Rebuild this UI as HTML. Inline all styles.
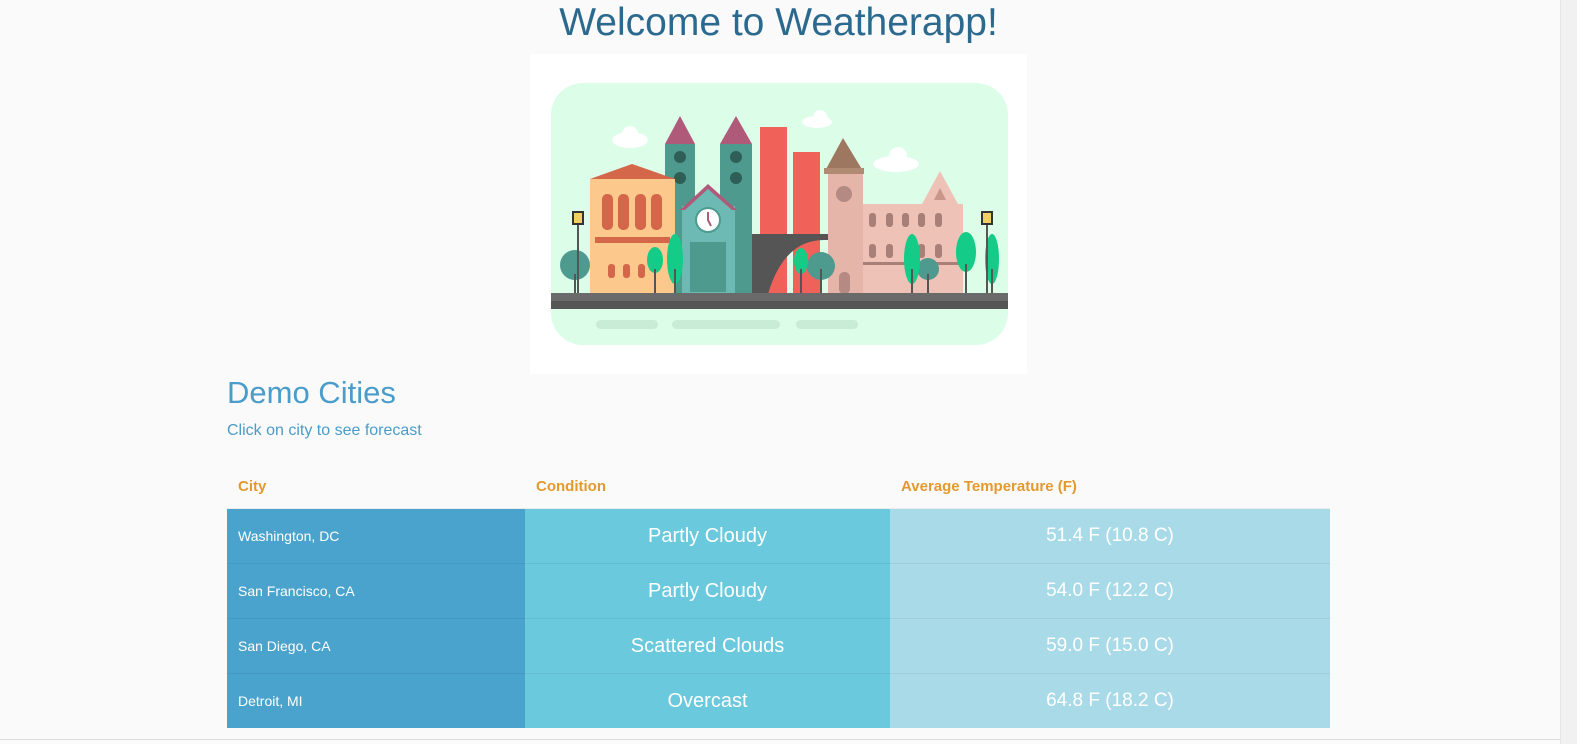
<!DOCTYPE html>
<html><head><meta charset="utf-8"><style>
html,body{margin:0;padding:0;background:#fafafa;width:1577px;height:744px;overflow:hidden;font-family:"Liberation Sans",sans-serif}
h1{position:absolute;left:0;width:1557px;top:1px;margin:0;text-align:center;font-weight:400;font-size:39px;line-height:44px;color:#2b6a8e}
.ill{position:absolute;left:530px;top:54px;width:497px;height:320px;background:#fff}
h2{position:absolute;left:227px;top:374px;margin:0;font-weight:400;font-size:31px;line-height:38px;color:#4a9ccb}
.sub{position:absolute;left:227px;top:422px;font-size:16px;color:#4a9ccb}
table{position:absolute;left:227px;top:465px;border-collapse:collapse;width:1103px}
th{height:43px;text-align:left;color:#e39a2c;font-weight:600;font-size:15px;padding:0 0 0 11px}
td{height:54px;border-top:1px solid rgba(0,0,0,0.06);color:#fff;padding:0}
td.c{background:#4aa3cc;width:287px;padding-left:11px;font-size:14px}
td.d{background:#6bc9dd;width:365px;text-align:center;font-size:20px}
td.t{background:#a9dae7;text-align:center;font-size:19px}
.sb{position:absolute;left:1560px;top:0;width:17px;height:744px;background:#f1f1f1;border-left:1px solid #e6e6e6}
.bl{position:absolute;left:0;top:739px;width:1560px;height:1px;background:#ddd}
</style></head><body>
<h1>Welcome to Weatherapp!</h1>
<div class="ill"><svg width="497" height="320" viewBox="0 0 497 320">
<rect x="21" y="29" width="457" height="262" rx="32" fill="#dcfde8"/>
<rect x="66" y="266" width="62" height="9" rx="4.5" fill="#c9ecd6"/>
<rect x="142" y="266" width="108" height="9" rx="4.5" fill="#c9ecd6"/>
<rect x="266" y="266" width="62" height="9" rx="4.5" fill="#c9ecd6"/>
<g fill="#fff"><ellipse cx="100" cy="86" rx="18" ry="8"/><circle cx="100" cy="80" r="8"/><ellipse cx="287" cy="68" rx="15" ry="6"/><circle cx="290" cy="63" r="7"/><ellipse cx="366" cy="110" rx="23" ry="8"/><circle cx="368" cy="102" r="9"/></g>
<rect x="135" y="90" width="30" height="150" fill="#4e9a8e"/><polygon points="135,90 150,62 165,90" fill="#b05a7a"/>
<rect x="190" y="90" width="32" height="150" fill="#4e9a8e"/><polygon points="190,90 206,62 222,90" fill="#b05a7a"/>
<circle cx="150" cy="103" r="6" fill="#2e5e55"/><circle cx="150" cy="124" r="6" fill="#2e5e55"/><circle cx="206" cy="103" r="6" fill="#2e5e55"/><circle cx="206" cy="124" r="6" fill="#2e5e55"/>
<rect x="60" y="125" width="85" height="115" fill="#fcc88c"/><polygon points="60,125 102,110 145,125" fill="#d4664a"/>
<g fill="#d4664a"><rect x="72" y="140" width="11" height="36" rx="5"/><rect x="88" y="140" width="11" height="36" rx="5"/><rect x="105" y="140" width="11" height="36" rx="5"/><rect x="121" y="140" width="11" height="36" rx="5"/><rect x="65" y="183" width="75" height="6"/><rect x="78" y="210" width="7" height="14" rx="3"/><rect x="93" y="210" width="7" height="14" rx="3"/><rect x="108" y="210" width="7" height="14" rx="3"/></g>
<rect x="152" y="152" width="53" height="88" fill="#6dbab5"/><polygon points="150,156 178,130 207,156" fill="#b05a7a"/><polygon points="155,156 178,135 202,156" fill="#6dbab5"/>
<circle cx="178" cy="166" r="12" fill="#fff" stroke="#4e9a8e" stroke-width="2"/><path d="M178 158v8l3 6" stroke="#b05a7a" stroke-width="2" fill="none"/>
<g fill="#4e9a8e"><rect x="160" y="188" width="36" height="50"/></g>
<rect x="230" y="73" width="27" height="167" fill="#f0615a"/><rect x="263" y="98" width="27" height="142" fill="#f0615a"/>
<path d="M222 180h76v6h-4q-40 0-56 54h-16z" fill="#555"/>
<rect x="298" y="117" width="35" height="123" fill="#e5b5aa"/><polygon points="295,117 313,84 333,117" fill="#9d7760"/><rect x="294" y="114" width="40" height="6" fill="#b08a72"/>
<circle cx="314" cy="140" r="8" fill="#b48a82"/><rect x="309" y="218" width="11" height="22" rx="5" fill="#b48a82"/>
<rect x="333" y="150" width="100" height="90" fill="#efc2b7"/><polygon points="392,150 410,117 428,150" fill="#efc2b7"/><polygon points="404,146 410,134 416,146" fill="#c8968a"/>
<g fill="#a98078"><rect x="339" y="159" width="7" height="14" rx="3"/><rect x="356" y="159" width="7" height="14" rx="3"/><rect x="372" y="159" width="7" height="14" rx="3"/><rect x="388" y="159" width="7" height="14" rx="3"/><rect x="405" y="159" width="7" height="14" rx="3"/><rect x="339" y="190" width="7" height="14" rx="3"/><rect x="356" y="190" width="7" height="14" rx="3"/><rect x="388" y="190" width="7" height="14" rx="3"/><rect x="405" y="190" width="7" height="14" rx="3"/><rect x="333" y="208" width="100" height="3"/></g>
<g fill="#4e9a8e"><circle cx="45" cy="211" r="15"/><circle cx="291" cy="212" r="14"/><circle cx="398" cy="215" r="11"/></g>
<g fill="#14cc87"><ellipse cx="125" cy="206" rx="8" ry="13"/><ellipse cx="145" cy="205" rx="8" ry="25"/><ellipse cx="271" cy="207" rx="7" ry="13"/><ellipse cx="382" cy="205" rx="8" ry="25"/><ellipse cx="436" cy="198" rx="10" ry="20"/><ellipse cx="462" cy="205" rx="7" ry="25"/></g>
<g stroke="#555" stroke-width="2"><line x1="45" y1="220" x2="45" y2="240"/><line x1="125" y1="215" x2="125" y2="240"/><line x1="145" y1="215" x2="145" y2="240"/><line x1="271" y1="215" x2="271" y2="240"/><line x1="291" y1="215" x2="291" y2="240"/><line x1="382" y1="215" x2="382" y2="240"/><line x1="398" y1="220" x2="398" y2="240"/><line x1="436" y1="210" x2="436" y2="240"/><line x1="462" y1="215" x2="462" y2="240"/><line x1="48" y1="170" x2="48" y2="240"/><line x1="457" y1="170" x2="457" y2="240"/></g>
<rect x="43" y="158" width="10" height="12" fill="#f0d060" stroke="#333" stroke-width="2"/><rect x="452" y="158" width="10" height="12" fill="#f0d060" stroke="#333" stroke-width="2"/>
<rect x="21" y="239" width="457" height="8" fill="#6a6a6a"/><rect x="21" y="247" width="457" height="8" fill="#555"/>
</svg></div>
<h2>Demo Cities</h2>
<div class="sub">Click on city to see forecast</div>
<table>
<tr><th>City</th><th>Condition</th><th>Average Temperature (F)</th></tr>
<tr><td class="c">Washington, DC</td><td class="d">Partly Cloudy</td><td class="t">51.4 F (10.8 C)</td></tr>
<tr><td class="c">San Francisco, CA</td><td class="d">Partly Cloudy</td><td class="t">54.0 F (12.2 C)</td></tr>
<tr><td class="c">San Diego, CA</td><td class="d">Scattered Clouds</td><td class="t">59.0 F (15.0 C)</td></tr>
<tr><td class="c">Detroit, MI</td><td class="d">Overcast</td><td class="t">64.8 F (18.2 C)</td></tr>
</table>
<div class="sb"></div><div class="bl"></div>
</body></html>
